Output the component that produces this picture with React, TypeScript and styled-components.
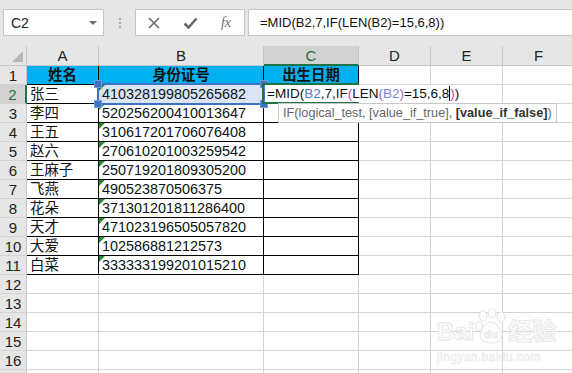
import styled, { createGlobalStyle, css } from "styled-components";

const GREEN = "#217346";
const GRID = "#d4d4d4";
const HEAD_LINE = "#c6c6c6";
const REF_BLUE = "#3f72c6";

const GlobalStyle = createGlobalStyle`
  body {
    margin: 0;
    background: #ffffff;
    font-family: "Liberation Sans", "Noto Sans CJK SC", sans-serif;
  }
`;

const Page = styled.div`
  position: relative;
  width: 572px;
  height: 373px;
  overflow: hidden;
  background: #fff;
`;

const TopBar = styled.div`
  display: flex;
  align-items: flex-start;
  box-sizing: border-box;
  height: 46px;
  padding: 9px 0 0 3px;
  background: #e6e6e6;
`;

const NameBox = styled.div`
  display: flex;
  align-items: center;
  justify-content: space-between;
  box-sizing: border-box;
  width: 101px;
  height: 27px;
  padding: 0 6px 0 7px;
  background: #fff;
  border: 1px solid ${HEAD_LINE};
  font-size: 14px;
  color: #222;
`;

const DropArrow = styled.span`
  width: 0;
  height: 0;
  border-left: 4px solid transparent;
  border-right: 4px solid transparent;
  border-top: 4px solid #707070;
`;

const Grip = styled.div`
  display: flex;
  flex-direction: column;
  align-items: center;
  gap: 2px;
  width: 31px;
  padding-top: 9px;

  span {
    width: 2px;
    height: 2px;
    background: #a8a8a8;
  }
`;

const ButtonBox = styled.div`
  display: flex;
  box-sizing: border-box;
  width: 110px;
  height: 27px;
  background: #fff;
  border: 1px solid ${HEAD_LINE};
`;

const BarButton = styled.div`
  display: flex;
  align-items: center;
  justify-content: center;
  width: 36px;
  height: 100%;
  color: #6a6a6a;
`;

const Fx = styled.span`
  font-family: "Liberation Serif", serif;
  font-style: italic;
  font-size: 14px;
  color: #6a6a6a;
`;

const FormulaBox = styled.div`
  flex: 1;
  box-sizing: border-box;
  height: 27px;
  margin-left: 3px;
  padding-left: 11px;
  background: #fff;
  border: 1px solid ${HEAD_LINE};
  border-right: none;
  font-size: 13px;
  line-height: 25px;
  color: #111;
  white-space: nowrap;
`;

const Sheet = styled.div`
  display: grid;
  grid-template-columns: 27px 72px 165px 95px 72px 72px 72px;
  grid-template-rows: 20px repeat(17, 19px);
`;

const Corner = styled.div`
  position: relative;
  box-sizing: border-box;
  background: #e6e6e6;
  border-right: 1px solid ${HEAD_LINE};
  border-bottom: 1px solid ${HEAD_LINE};

  &::after {
    content: "";
    position: absolute;
    right: 3px;
    bottom: 3px;
    border-left: 11px solid transparent;
    border-bottom: 11px solid #b9b9b9;
  }
`;

const ColHead = styled.div<{ $active?: boolean }>`
  box-sizing: border-box;
  text-align: center;
  font-size: 15px;
  line-height: 19px;
  color: #222;
  background: #e6e6e6;
  border-right: 1px solid ${HEAD_LINE};
  border-bottom: 1px solid ${HEAD_LINE};
  ${(p) =>
    p.$active &&
    css`
      background: #d2d2d2;
      color: ${GREEN};
      border-bottom: 2px solid ${GREEN};
    `}
`;

const RowHead = styled.div<{ $active?: boolean }>`
  box-sizing: border-box;
  text-align: center;
  font-size: 15px;
  line-height: 19px;
  color: #222;
  background: #e6e6e6;
  border-right: 1px solid ${HEAD_LINE};
  border-bottom: 1px solid ${GRID};
  ${(p) =>
    p.$active &&
    css`
      background: #d2d2d2;
      color: ${GREEN};
      border-right: 2px solid ${GREEN};
    `}
`;

const Cell = styled.div<{ $table?: boolean; $title?: boolean; $flag?: boolean; $ref?: boolean }>`
  position: relative;
  box-sizing: border-box;
  padding-left: 3px;
  font-size: 14.4px;
  line-height: 19px;
  color: #111;
  white-space: nowrap;
  border-right: 1px solid ${(p) => (p.$table ? "#000" : GRID)};
  border-bottom: 1px solid ${(p) => (p.$table ? "#000" : GRID)};
  ${(p) =>
    p.$title &&
    css`
      padding-left: 0;
      text-align: center;
      font-weight: 700;
      background: #00b0f0;
    `}
  ${(p) =>
    p.$ref &&
    css`
      background: #dae4f2;
    `}
  ${(p) =>
    p.$flag &&
    css`
      &::before {
        content: "";
        position: absolute;
        top: 0;
        left: 0;
        border-top: 6px solid #1f8a2e;
        border-right: 6px solid transparent;
      }
    `}
`;

const RefBox = styled.div`
  position: absolute;
  top: -2px;
  left: -2px;
  right: -2px;
  bottom: -2px;
  border: 2px solid ${REF_BLUE};
  z-index: 2;
`;

const Handle = styled.span<{ $top: boolean; $left: boolean }>`
  position: absolute;
  width: 6px;
  height: 6px;
  background: ${REF_BLUE};
  border: 1px solid #6f98d8;
  ${(p) => (p.$top ? "top: -5px;" : "bottom: -5px;")}
  ${(p) => (p.$left ? "left: -5px;" : "right: -5px;")}
`;

const ActiveBox = styled.div`
  position: absolute;
  top: -2px;
  left: -2px;
  right: -1px;
  bottom: -1px;
  border: 2px solid ${GREEN};
  z-index: 2;
`;

const EditText = styled.div`
  position: absolute;
  top: 0;
  left: 1px;
  z-index: 3;
  height: 17px;
  padding: 0 3px 0 2px;
  background: #fff;
  font-size: 13.5px;
  line-height: 18px;
  color: #111;
`;

const Part = styled.span<{ $color: string }>`
  color: ${(p) => p.$color};
`;

const Caret = styled.span`
  display: inline-block;
  width: 1px;
  height: 15px;
  margin: 0 0 -3px;
  background: #000;
`;

const Tip = styled.div`
  position: absolute;
  top: 18px;
  left: 14px;
  z-index: 4;
  box-sizing: border-box;
  height: 20px;
  padding: 0 4px;
  background: #fff;
  border: 1px solid #c8c8c8;
  font-size: 12.7px;
  line-height: 18px;
  color: #666;
  white-space: nowrap;

  b {
    color: #333;
  }
`;

const Watermark = styled.div`
  position: absolute;
  left: 437px;
  top: 308px;
  display: flex;
  flex-direction: column;
  align-items: flex-start;
  color: #fdfdfd;
  -webkit-text-stroke: 1px #e8e8e8;
  pointer-events: none;
`;

const MarkTop = styled.div`
  display: flex;
  align-items: flex-end;
  font-size: 24px;
  font-weight: 700;
  line-height: 24px;
`;

const MarkSub = styled.div`
  margin-top: 6px;
  font-size: 12px;
  letter-spacing: 0.4px;
  -webkit-text-stroke: 0.5px #e8e8e8;
`;

const names = ["张三", "李四", "王五", "赵六", "王麻子", "飞燕", "花朵", "天才", "大爱", "白菜"];
const ids = [
  "410328199805265682",
  "520256200410013647",
  "310617201706076408",
  "270610201003259542",
  "250719201809305200",
  "490523870506375",
  "371301201811286400",
  "471023196505057820",
  "102586881212573",
  "333333199201015210",
];
const titles = ["姓名", "身份证号", "出生日期"];
const letters = ["A", "B", "C", "D", "E", "F"];

function Paw() {
  return (
    <svg width="34" height="36" viewBox="0 0 34 36">
      <g fill="#fdfdfd" stroke="#e4e4e4" strokeWidth="1">
        <ellipse cx="9" cy="8" rx="4" ry="5" />
        <ellipse cx="18" cy="5" rx="4" ry="5" />
        <ellipse cx="27" cy="9" rx="4" ry="5" />
        <ellipse cx="5" cy="18" rx="3.5" ry="4.5" />
        <path d="M17 14c-6 0-11 8-11 13 0 5 4 8 11 8s11-3 11-8c0-5-5-13-11-13z" />
      </g>
      <text x="10" y="30" fontSize="11" fontWeight="700" fill="#fdfdfd" stroke="#e4e4e4" strokeWidth="0.6">du</text>
    </svg>
  );
}

function CellText({ row, col }: { row: number; col: number }) {
  if (row === 2 && col === 2) {
    return (
      <>
        <ActiveBox />
        <EditText>
          =MID(<Part $color="#4a78d6">B2</Part>,7,IF
          <Part $color="#c9479f">(</Part>LEN<Part $color="#9066cc">(</Part>
          <Part $color="#7b86e0">B2</Part>
          <Part $color="#9066cc">)</Part>=15,6,8<Caret />
          <Part $color="#c9479f">)</Part>)
        </EditText>
        <Tip>
          IF(logical_test, [value_if_true], <b>[value_if_false]</b>)
        </Tip>
      </>
    );
  }
  if (row === 2 && col === 1) {
    return (
      <>
        {ids[0]}
        <RefBox>
          <Handle $top $left />
          <Handle $top $left={false} />
          <Handle $top={false} $left />
          <Handle $top={false} $left={false} />
        </RefBox>
      </>
    );
  }
  if (row === 1 && col < 3) return <>{titles[col]}</>;
  if (row >= 2 && row <= 11 && col === 0) return <>{names[row - 2]}</>;
  if (row >= 2 && row <= 11 && col === 1) return <>{ids[row - 2]}</>;
  return null;
}

function Row({ r }: { r: number }) {
  return (
    <>
      <RowHead $active={r === 2}>{r}</RowHead>
      {Array.from({ length: 6 }, (_, c) => (
        <Cell
          key={c}
          $table={r <= 11 && c < 3}
          $title={r === 1 && c < 3}
          $flag={r >= 2 && r <= 11 && c === 1}
          $ref={r === 2 && c === 1}
        >
          <CellText row={r} col={c} />
        </Cell>
      ))}
    </>
  );
}

export default function App() {
  const rows = Array.from({ length: 17 }, (_, i) => i + 1);
  return (
    <Page>
      <GlobalStyle />
      <TopBar>
        <NameBox>
          C2
          <DropArrow />
        </NameBox>
        <Grip>
          <span />
          <span />
          <span />
        </Grip>
        <ButtonBox>
          <BarButton>
            <svg width="12" height="12" viewBox="0 0 12 12">
              <path d="M1 1l10 10M11 1L1 11" stroke="currentColor" strokeWidth="1.6" />
            </svg>
          </BarButton>
          <BarButton>
            <svg width="15" height="12" viewBox="0 0 15 12">
              <path d="M1.5 6.5l4 4 8-9" stroke="currentColor" strokeWidth="2.6" fill="none" />
            </svg>
          </BarButton>
          <BarButton>
            <Fx>fx</Fx>
          </BarButton>
        </ButtonBox>
        <FormulaBox>=MID(B2,7,IF(LEN(B2)=15,6,8))</FormulaBox>
      </TopBar>

      <Sheet>
        <Corner />
        {letters.map((l) => (
          <ColHead key={l} $active={l === "C"}>
            {l}
          </ColHead>
        ))}
        {rows.map((r) => (
          <Row key={r} r={r} />
        ))}
      </Sheet>

      <Watermark>
        <MarkTop>
          Bai
          <Paw />
          经验
        </MarkTop>
        <MarkSub>jingyan.baidu.com</MarkSub>
      </Watermark>
    </Page>
  );
}
